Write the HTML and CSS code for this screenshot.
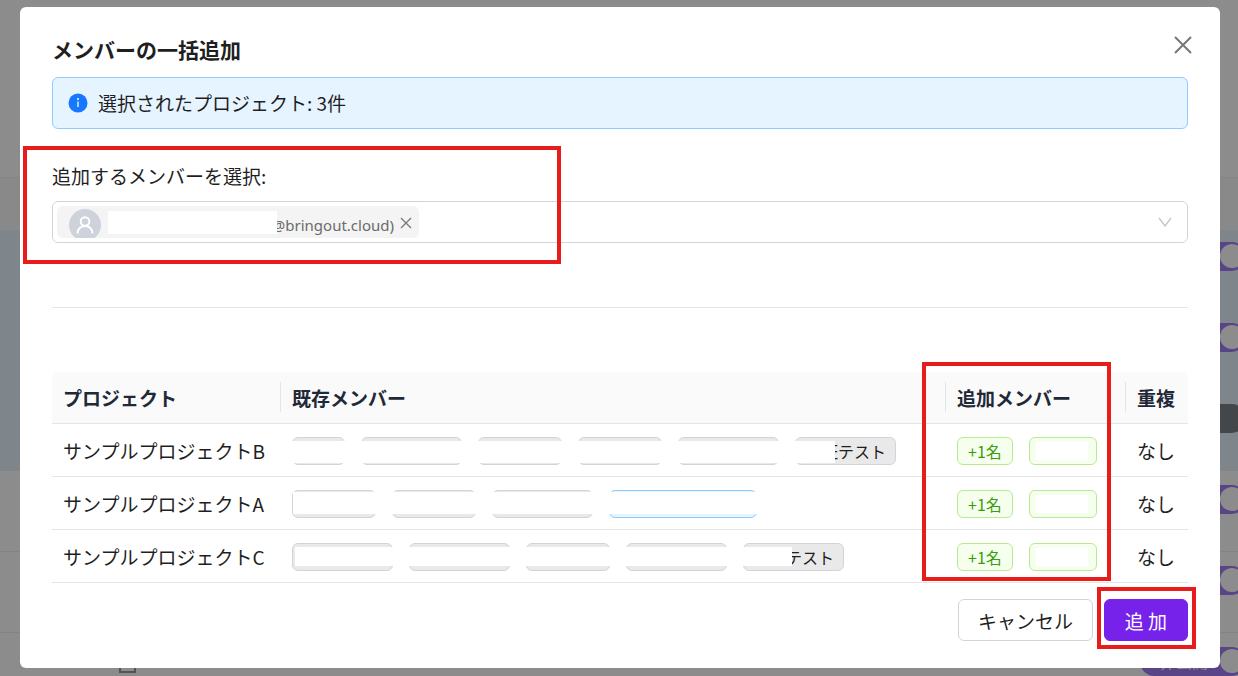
FILE: index.html
```html
<!DOCTYPE html>
<html lang="ja">
<head>
    <meta charset="UTF-8">
    <meta name="viewport" content="width=device-width, initial-scale=1.0">
    <title>メンバーの一括追加</title>
    <link rel="stylesheet" href="styles.css">
</head>
<body>
    <!-- Project list behind the dialog -->
    <div class="page">
        <div class="page-top"></div>
        <div class="page-head"></div>
        <div class="page-row selected first"><span class="switch"></span></div>
        <div class="page-row selected"><span class="switch"></span></div>
        <div class="page-row selected"><span class="switch off"></span></div>
        <div class="page-row"><span class="switch"></span></div>
        <div class="page-row"><span class="switch"></span></div>
        <div class="page-row">
            <span class="page-check"></span>
            <span class="switch">非公開</span>
        </div>
    </div>

    <div class="overlay">
        <div class="modal" role="dialog" aria-labelledby="modal-title">
            <div class="modal-header">
                <h1 id="modal-title">メンバーの一括追加</h1>
                <button type="button" class="close" aria-label="閉じる">
                    <svg viewBox="0 0 18 18" width="18" height="18"><path d="M1 1L17 17M17 1L1 17"/></svg>
                </button>
            </div>

            <div class="alert">
                <svg viewBox="0 0 20 20" width="20" height="20">
                    <circle cx="10" cy="10" r="9.5" fill="#1677ff"/>
                    <path d="M10 8.5V14" stroke="#fff" stroke-width="1.3"/>
                    <circle cx="10" cy="6" r="1" fill="#fff"/>
                </svg>
                <span>選択されたプロジェクト: 3件</span>
            </div>

            <div class="field">
                <label for="member">追加するメンバーを選択:</label>
                <div class="select">
                    <span class="member">
                        <span class="avatar">
                            <svg viewBox="0 0 18 18" width="18" height="18"><circle cx="9" cy="5.5" r="4.3"/><path d="M1.5 17.5C1.5 13 4.8 10 9 10s7.5 3 7.5 7.5"/></svg>
                        </span>
                        <span class="member-mail">@bringout.cloud)</span>
                        <span class="cover"></span>
                        <button type="button" class="remove" aria-label="削除">
                            <svg viewBox="0 0 12 12" width="12" height="12"><path d="M1 1L11 11M11 1L1 11"/></svg>
                        </button>
                    </span>
                    <input type="text" id="member" role="combobox" aria-expanded="false">
                    <svg class="arrow" viewBox="0 0 14 10" width="14" height="10"><path d="M1 1L7 9L13 1"/></svg>
                </div>
                <span class="mark mark-field"></span>
            </div>

            <hr>

            <div class="table-wrap">
                <table>
                    <thead>
                        <tr>
                            <th class="col-project">プロジェクト</th>
                            <th>既存メンバー</th>
                            <th class="col-add">追加メンバー</th>
                            <th class="col-dup">重複</th>
                        </tr>
                    </thead>
                    <tbody>
                        <tr>
                            <td>サンプルプロジェクトB</td>
                            <td>
                                <div class="tags">
                                    <span class="tag sm"></span>
                                    <span class="tag lg"></span>
                                    <span class="tag md"></span>
                                    <span class="tag md"></span>
                                    <span class="tag lg"></span>
                                    <span class="tag lg">検証テスト</span>
                                    <span class="cover cover-b"></span>
                                </div>
                            </td>
                            <td>
                                <div class="tags">
                                    <span class="tag green">+1名</span>
                                    <span class="tag green name"><span class="blank"></span></span>
                                </div>
                            </td>
                            <td>なし</td>
                        </tr>
                        <tr>
                            <td>サンプルプロジェクトA</td>
                            <td>
                                <div class="tags">
                                    <span class="tag md"></span>
                                    <span class="tag md"></span>
                                    <span class="tag lg"></span>
                                    <span class="tag xl blue"></span>
                                    <span class="cover cover-a"></span>
                                </div>
                            </td>
                            <td>
                                <div class="tags">
                                    <span class="tag green">+1名</span>
                                    <span class="tag green name"><span class="blank"></span></span>
                                </div>
                            </td>
                            <td>なし</td>
                        </tr>
                        <tr>
                            <td>サンプルプロジェクトC</td>
                            <td>
                                <div class="tags">
                                    <span class="tag lg"></span>
                                    <span class="tag lg"></span>
                                    <span class="tag md"></span>
                                    <span class="tag lg"></span>
                                    <span class="tag lg">検証テスト</span>
                                    <span class="cover cover-c"></span>
                                </div>
                            </td>
                            <td>
                                <div class="tags">
                                    <span class="tag green">+1名</span>
                                    <span class="tag green name"><span class="blank"></span></span>
                                </div>
                            </td>
                            <td>なし</td>
                        </tr>
                    </tbody>
                </table>
                <span class="mark mark-column"></span>
            </div>

            <div class="modal-footer">
                <button type="button" class="btn">キャンセル</button>
                <div class="submit">
                    <button type="submit" class="btn primary">追 加</button>
                    <span class="mark mark-submit"></span>
                </div>
            </div>
        </div>
    </div>
</body>
</html>
```

FILE: styles.css
```css
:root {
    --text: #1f1f1f;
    --border: #d0d5dd;
    --line: #e4e5e7;
    --primary: #7722ea;
    --mark: #e91c1c;
}

* {
    box-sizing: border-box;
}

body {
    margin: 0;
    font-family: "Noto Sans CJK JP", "Noto Sans", sans-serif;
    font-size: 19px;
    line-height: 28px;
    color: var(--text);
}

button, input {
    font: inherit;
    color: inherit;
}

/* Page behind the dialog */
.page {
    height: 100vh;
    overflow: hidden;
}

.page-top {
    height: 178px;
    border-bottom: 1px solid #f0f0f0;
}

.page-head {
    height: 52px;
    background: #fafafa;
}

.page-row {
    display: flex;
    justify-content: flex-end;
    align-items: flex-end;
    height: 81px;
    padding-bottom: 37px;
    border-bottom: 1px solid #f0f0f0;
    position: relative;
}

.page-row.first {
    height: 79px;
}

.page-row.selected {
    background: #e6f4ff;
}

.switch {
    width: 106px;
    height: 29px;
    margin-right: -8px;
    padding-left: 20px;
    border-radius: 15px;
    background: #a07cf5;
    color: #fff;
    font-size: 16px;
    flex: none;
    position: relative;
}

.switch::after {
    content: "";
    position: absolute;
    top: 2px;
    right: 2px;
    width: 24px;
    height: 24px;
    border-radius: 50%;
    background: #fff;
}

.switch.off {
    background: #7d8288;
}

.switch.off::after {
    display: none;
}

.page-check {
    position: absolute;
    left: 119px;
    bottom: 40px;
    width: 17px;
    height: 17px;
    border: 2px solid #999;
}

/* Dialog */
.overlay {
    position: fixed;
    inset: 0;
    padding: 7px 18px 8px 20px;
    background: rgba(0, 0, 0, 0.45);
}

.modal {
    padding: 24px 32px 27px;
    background: #fff;
    border-radius: 6px;
}

.modal-header {
    display: flex;
    justify-content: space-between;
    align-items: flex-start;
    height: 46px;
}

h1 {
    margin: 3px 0 0;
    font-size: 21px;
    line-height: 30px;
    font-weight: 700;
}

.close, .remove {
    display: flex;
    padding: 0;
    border: 0;
    background: none;
    cursor: pointer;
}

.close {
    margin: 5px -4px 0 0;
}

.close svg, .remove svg, .arrow, .avatar svg {
    fill: none;
    stroke: #73787e;
    stroke-width: 2;
}

.alert {
    display: flex;
    align-items: center;
    gap: 10px;
    height: 52px;
    padding: 0 15px;
    border: 1px solid #91caff;
    border-radius: 6px;
    background: #e6f4ff;
}

.field {
    position: relative;
    margin-top: 33px;
}

.field label {
    display: block;
    margin-bottom: 11px;
}

.select {
    display: flex;
    align-items: center;
    height: 42px;
    padding: 0 15px 0 4px;
    border: 1px solid var(--border);
    border-radius: 6px;
}

.select input {
    flex: 1;
    min-width: 0;
    border: 0;
    outline: 0;
    background: none;
}

.select .arrow {
    stroke: #c4c9d1;
    stroke-width: 1.4;
}

.member {
    display: flex;
    align-items: flex-start;
    width: 362px;
    height: 32px;
    padding: 3px 7px 0 12px;
    border-radius: 6px;
    background: #f4f4f4;
    color: #6b6b6b;
    font-family: "Noto Sans", "Noto Sans CJK JP", sans-serif;
    font-size: 15px;
    position: relative;
    overflow: hidden;
}

.avatar {
    display: flex;
    justify-content: center;
    align-items: center;
    width: 32px;
    height: 32px;
    border-radius: 50%;
    background: #ced2da;
}

.avatar svg {
    stroke: #fff;
}

.member-mail {
    margin: 2px 6px 0 auto;
}

.remove {
    margin-top: 8px;
}

.remove svg {
    stroke-width: 1.3;
}

.cover {
    position: absolute;
    background: #fff;
}

.member .cover {
    top: 5px;
    bottom: 4px;
    left: 51px;
    width: 169px;
}

hr {
    margin: 64px 0;
    border: 0;
    border-top: 1px solid var(--line);
}

/* Table */
.table-wrap {
    position: relative;
}

table {
    width: 100%;
    table-layout: fixed;
    border-collapse: separate;
    border-spacing: 0;
}

th, td {
    height: 53px;
    padding: 1px 11px 0;
    border-bottom: 1px solid var(--line);
    text-align: left;
    white-space: nowrap;
}

th {
    position: relative;
    height: 52px;
    background: #fafafa;
    color: #1f2937;
    font-weight: 700;
}

th:first-child {
    border-top-left-radius: 6px;
}

th:last-child {
    border-top-right-radius: 6px;
}

th:not(:last-child)::after {
    content: "";
    position: absolute;
    top: 10px;
    right: 0;
    width: 1px;
    height: 30px;
    background: var(--line);
}

.col-project {
    width: 229px;
}

.col-add {
    width: 180px;
}

.col-dup {
    width: 62px;
}

.tags {
    display: flex;
    gap: 16px;
    position: relative;
}

.tag {
    height: 28px;
    padding: 0 10px;
    border: 1px solid var(--border);
    border-radius: 6px;
    background: #e9e9e9;
    font-size: 16px;
    line-height: 26px;
}

.sm {
    width: 53px;
}

.md {
    width: 84px;
}

.lg {
    width: 101px;
}

.xl {
    width: 148px;
}

.blue {
    border-color: #91caff;
    background: #e6f4ff;
}

.green {
    border-color: #b7eb8f;
    background: #f6ffed;
    color: #389e0d;
}

.name {
    display: flex;
    width: 68px;
    padding: 4px 8px 4px 6px;
}

.blank {
    flex: 1;
    background: #fff;
}

.cover-b {
    top: 4px;
    bottom: 2px;
    left: 0;
    width: 543px;
}

.cover-a {
    top: 2px;
    bottom: 4px;
    left: 1px;
    width: 466px;
}

.cover-c {
    top: 4px;
    bottom: 5px;
    left: 3px;
    width: 497px;
}

/* Footer */
.modal-footer {
    display: flex;
    justify-content: flex-end;
    gap: 11px;
    margin-top: 16px;
}

.btn {
    height: 42px;
    padding: 2px 19px 0;
    border: 1px solid var(--border);
    border-radius: 6px;
    background: #fff;
    cursor: pointer;
}

.primary {
    min-width: 84px;
    border-color: var(--primary);
    background: var(--primary);
    color: #fff;
}

.submit {
    position: relative;
}

/* Red highlight frames */
.mark {
    position: absolute;
    border: 4px solid var(--mark);
    pointer-events: none;
}

.mark-field {
    top: -16px;
    bottom: -21px;
    left: -29px;
    width: 538px;
}

.mark-column {
    top: -10px;
    bottom: 2px;
    right: 77px;
    width: 189px;
}

.mark-submit {
    inset: -12px -8px -8px -7px;
}
```
